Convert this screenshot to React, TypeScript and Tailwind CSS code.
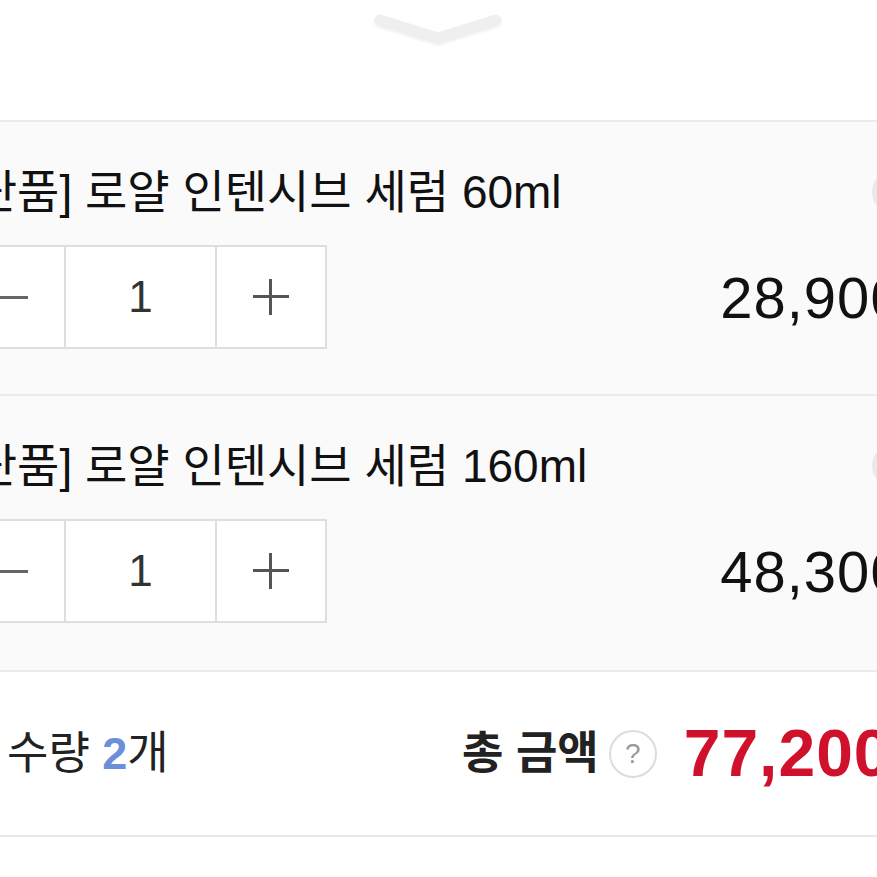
import React from 'react';

const FONT = { fontFamily: '"Liberation Sans", "Noto Sans CJK KR", sans-serif' };

interface Item {
  name: string;
  qty: number;
  price: string;
}

const ITEMS: Item[] = [
  { name: '[단품] 로얄 인텐시브 세럼 60ml', qty: 1, price: '28,900원' },
  { name: '[단품] 로얄 인텐시브 세럼 160ml', qty: 1, price: '48,300원' },
];

function Chevron() {
  return (
    <svg width="130" height="40" viewBox="0 0 130 40" className="drop-shadow-[0_2px_1px_rgba(0,0,0,0.06)]">
      <polyline
        points="6,8 64,26 122,8"
        fill="none"
        stroke="#efefef"
        strokeWidth="11"
        strokeLinecap="round"
        strokeLinejoin="round"
      />
    </svg>
  );
}

function Stepper({ qty }: { qty: number }) {
  return (
    <div className="flex h-[104px] border-2 border-[#dedede] bg-white">
      <button className="w-[108px] flex items-center justify-center text-[#555]">
        <span className="block w-[36px] h-[3px] bg-[#666]" />
      </button>
      <div className="w-[153px] border-x-2 border-[#dedede] flex items-center justify-center text-[44px] text-[#333]">
        {qty}
      </div>
      <button className="w-[108px] flex items-center justify-center">
        <span className="relative block w-[36px] h-[36px]">
          <span className="absolute left-0 top-[16px] w-[36px] h-[3px] bg-[#555]" />
          <span className="absolute top-0 left-[16px] w-[3px] h-[36px] bg-[#555]" />
        </span>
      </button>
    </div>
  );
}

function CartRow({ item }: { item: Item }) {
  return (
    <div className="h-[274px] pt-[42px] border-b-2 border-[#ebebeb] last:border-b-0">
      <div className="flex items-center justify-between h-[56px]">
        <div className="text-[46px] text-[#111] ml-[8px]">{item.name}</div>
        <div className="w-[44px] h-[44px] rounded-full bg-[#e9e9e9] mr-[38px]" />
      </div>
      <div className="flex items-center justify-between mt-[25px]">
        <Stepper qty={item.qty} />
        <div className="text-[58px] text-[#111] tracking-[1px] -mr-[4px]">{item.price}</div>
      </div>
    </div>
  );
}

export default function App() {
  return (
    <div className="w-[877px] h-[877px] overflow-hidden bg-white" style={FONT}>
      <div className="h-[120px] flex justify-center pt-[12px]">
        <Chevron />
      </div>
      <div className="border-t-2 border-[#ebebeb] bg-[#fafafa]">
        <div className="w-[1000px] -ml-[46px]">
          {ITEMS.map((it, i) => (
            <CartRow key={i} item={it} />
          ))}
        </div>
      </div>
      <div className="border-t-2 border-[#ebebeb] h-[167px] border-b-2 border-b-[#e8e8e8]">
        <div className="w-[1000px] h-full flex items-center pl-[7px]">
          <div className="w-[455px] shrink-0 text-[45px] text-[#222]">
            수량 <span className="text-[#6b8fd8] font-bold">2</span>개
          </div>
          <div className="flex items-center whitespace-nowrap">
            <span className="text-[45px] text-[#222] font-bold">총 금액</span>
            <span className="ml-[10px] w-[48px] h-[48px] rounded-full border-2 border-[#dcdcdc] flex items-center justify-center text-[28px] text-[#999]">
              ?
            </span>
            <span className="ml-[27px] text-[66px] font-bold text-[#d0112b] tracking-[1px]">77,200원</span>
          </div>
        </div>
      </div>
    </div>
  );
}
